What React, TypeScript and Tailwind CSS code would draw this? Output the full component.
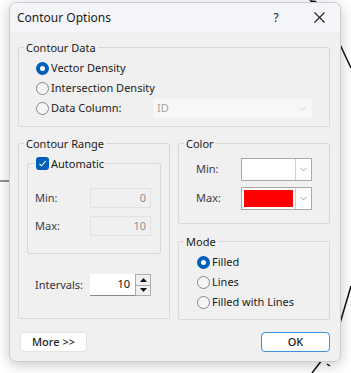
import { ChevronDown } from "lucide-react";

function Radio({ checked }: { checked?: boolean }) {
  return checked ? (
    <span className="flex h-[13px] w-[13px] shrink-0 items-center justify-center rounded-full bg-[#005fb8]">
      <span className="h-[5px] w-[5px] rounded-full bg-white" />
    </span>
  ) : (
    <span className="h-[13px] w-[13px] shrink-0 rounded-full border border-[#878787] bg-[#f5f5f5]" />
  );
}

function RadioRow({ label, checked }: { label: string; checked?: boolean }) {
  return (
    <div className="flex h-[20px] items-center gap-[2px]">
      <Radio checked={checked} />
      <span>{label}</span>
    </div>
  );
}

function ColorCombo({ fill }: { fill: string }) {
  return (
    <div className="flex h-[23px] w-[71px] border border-[#a9a9a9] bg-white">
      <div className="flex-1 p-[2px]">
        <div className="h-full w-full" style={{ background: fill }} />
      </div>
      <div className="flex w-[16px] items-center justify-center border-l border-[#d0d0d0]">
        <ChevronDown size={11} strokeWidth={1.5} className="text-[#7a7a7a]" />
      </div>
    </div>
  );
}

export default function App() {
  return (
    <div className="relative h-[373px] w-[351px] overflow-hidden bg-white font-['Noto_Sans',sans-serif] text-[11px] text-[#1b1b1b]">
      {/* drawing behind the dialog */}
      <svg className="absolute inset-0" width="351" height="373">
        <path d="M309 0 L317 1 L313 4 Z" fill="#111" />
        <path d="M336 36 L351 68" stroke="#111" strokeWidth="1.5" />
        <path d="M0 181 L9 181" stroke="#222" strokeWidth="1" />
        <path d="M338 330 L351 286" stroke="#111" strokeWidth="1.5" />
        <path d="M312 373 L322 360" stroke="#111" strokeWidth="1.5" />
        <path d="M327 364 L330 366" stroke="#111" strokeWidth="1.5" />
      </svg>

      <div className="relative ml-[9px] mt-[2px] flex h-[360px] w-[332px] flex-col overflow-hidden rounded-[7px] border border-[#cdcdcd] bg-[#f0f0f0] shadow-[0_3px_14px_rgba(0,0,0,0.22)]">
        {/* title bar */}
        <div className="flex h-[29px] items-center bg-[#f3f5f8] pl-[7px] text-[12px]">
          <span className="flex-1">Contour Options</span>
          <span className="w-[16px] text-center text-[12px]">?</span>
          <svg className="ml-[30px] mr-[15px]" width="11" height="11" viewBox="0 0 11 11">
            <path d="M0.5 0.5 L10.5 10.5 M10.5 0.5 L0.5 10.5" stroke="#222" strokeWidth="1.1" />
          </svg>
        </div>

        <div className="flex flex-col pl-[8px] pt-[8px]">
          {/* Contour Data */}
          <fieldset className="h-[87px] w-[312px] rounded-[2px] border border-[#d8d8d8]">
            <legend className="ml-[5px] px-[2px] leading-[15px]">Contour Data</legend>
            <div className="flex flex-col pl-[17px] pt-[3px]">
              <RadioRow label="Vector Density" checked />
              <RadioRow label="Intersection Density" />
              <div className="flex h-[20px] items-center">
                <div className="flex w-[117px] items-center gap-[2px]">
                  <Radio />
                  <span>Data Column:</span>
                </div>
                <div className="flex h-[19px] w-[159px] items-center justify-between bg-[#f7f7f7] pl-[4px] pr-[4px] text-[#a6a6a6]">
                  <span>ID</span>
                  <ChevronDown size={11} strokeWidth={1.3} className="text-[#b8b8b8]" />
                </div>
              </div>
            </div>
          </fieldset>

          <div className="mt-[9px] flex gap-[8px]">
            {/* Contour Range */}
            <fieldset className="h-[183px] w-[152px] rounded-[2px] border border-[#d8d8d8]">
              <legend className="ml-[5px] px-[2px] leading-[15px]">Contour Range</legend>
              <fieldset className="ml-[8px] mt-[5px] h-[98px] w-[134px] rounded-[2px] border border-[#d8d8d8]">
                <legend className="ml-[7px] flex items-center gap-[2px] px-[1px] leading-[15px]">
                  <span className="flex h-[13px] w-[13px] items-center justify-center rounded-[3px] bg-[#005fb8]">
                    <svg width="9" height="9" viewBox="0 0 9 9">
                      <path d="M1.5 4.8 L3.6 6.8 L7.6 2.2" fill="none" stroke="#fff" strokeWidth="1.1" />
                    </svg>
                  </span>
                  <span>Automatic</span>
                </legend>
                <div className="flex flex-col gap-[8px] pl-[7px] pt-[17px] text-[#3c3c46]">
                  <div className="flex h-[20px] items-center">
                    <span className="w-[55px]">Min:</span>
                    <div className="flex h-[20px] w-[61px] items-center justify-end border border-[#e2e2e2] bg-[#f0f0f0] pr-[4px] text-[#8f8f8f]">
                      0
                    </div>
                  </div>
                  <div className="flex h-[20px] items-center">
                    <span className="w-[55px]">Max:</span>
                    <div className="flex h-[20px] w-[61px] items-center justify-end border border-[#e2e2e2] bg-[#f0f0f0] pr-[4px] text-[#8f8f8f]">
                      10
                    </div>
                  </div>
                </div>
              </fieldset>
              <div className="mt-[20px] flex h-[22px] items-center pl-[16px]">
                <span className="w-[55px] text-[#333]">Intervals:</span>
                <div className="flex h-[22px] w-[45px] items-center justify-end border-b border-b-[#8a8a8a] bg-white pr-[5px] text-[#111]">
                  10
                </div>
                <div className="flex h-[22px] w-[16px] flex-col border border-[#adadad]">
                  <div className="flex flex-1 items-center justify-center border-b border-[#adadad] bg-[#f0f0f0]">
                    <svg width="7" height="4" viewBox="0 0 7 4">
                      <path d="M0 4 L3.5 0 L7 4 Z" fill="#111" />
                    </svg>
                  </div>
                  <div className="flex flex-1 items-center justify-center bg-[#f0f0f0]">
                    <svg width="7" height="4" viewBox="0 0 7 4">
                      <path d="M0 0 L7 0 L3.5 4 Z" fill="#111" />
                    </svg>
                  </div>
                </div>
              </div>
            </fieldset>

            <div className="flex flex-col">
              {/* Color */}
              <fieldset className="h-[88px] w-[152px] rounded-[2px] border border-[#d8d8d8]">
                <legend className="ml-[5px] px-[2px] leading-[15px]">Color</legend>
                <div className="flex flex-col gap-[6px] pl-[17px] pt-[7px] text-[#3c3c46]">
                  <div className="flex items-center">
                    <span className="w-[45px]">Min:</span>
                    <ColorCombo fill="#ffffff" />
                  </div>
                  <div className="flex items-center">
                    <span className="w-[45px]">Max:</span>
                    <ColorCombo fill="#ff0000" />
                  </div>
                </div>
              </fieldset>

              {/* Mode */}
              <fieldset className="mt-[10px] h-[86px] w-[152px] rounded-[2px] border border-[#d8d8d8]">
                <legend className="ml-[5px] px-[2px] leading-[15px]">Mode</legend>
                <div className="flex flex-col pl-[18px] pt-[3px]">
                  <RadioRow label="Filled" checked />
                  <RadioRow label="Lines" />
                  <RadioRow label="Filled with Lines" />
                </div>
              </fieldset>
            </div>
          </div>

          {/* buttons */}
          <div className="mt-[12px] flex w-[312px] items-center justify-between pl-[2px]">
            <button className="h-[20px] w-[67px] rounded-[4px] border border-[#e3e3e3] bg-white text-[11px] font-medium text-[#222]">
              More &gt;&gt;
            </button>
            <button className="h-[20px] w-[69px] rounded-[4px] border border-[#3d8fe0] bg-white text-[11px] font-medium text-[#222]">
              OK
            </button>
          </div>
        </div>
      </div>
    </div>
  );
}
